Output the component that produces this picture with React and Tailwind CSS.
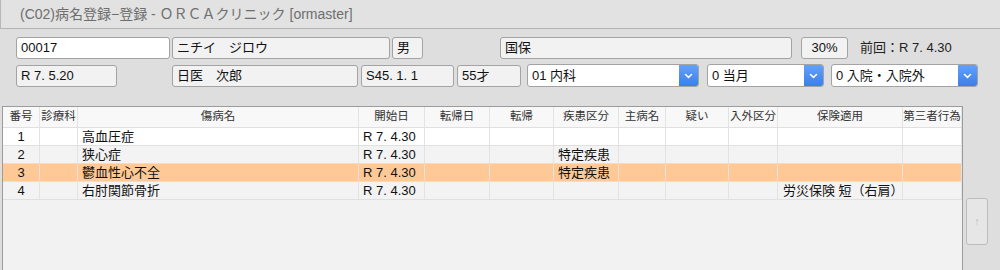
import React from "react";

const FONT = { fontFamily: '"Liberation Sans", "Noto Sans CJK JP", sans-serif' };

function Field({ w, children, white, className = "" }) {
  return (
    <div
      className={`h-[22px] shrink-0 rounded-[3px] border border-[#a3a3a3] px-[4px] flex items-center text-[13px] text-[#111] whitespace-nowrap overflow-hidden ${white ? "bg-white" : "bg-[#f2f2f2]"} ${className}`}
      style={{ width: w }}
    >
      {children}
    </div>
  );
}

function Select({ w, children, className = "" }) {
  return (
    <div
      className={`h-[23px] shrink-0 rounded-[3px] border border-[#a3a3a3] bg-white flex items-stretch overflow-hidden ${className}`}
      style={{ width: w }}
    >
      <div className="flex-1 flex items-center px-[4px] text-[13px] text-[#111] whitespace-nowrap">{children}</div>
      <div className="w-[19px] bg-gradient-to-b from-[#62a0f8] to-[#3c7fea] flex items-center justify-center">
        <svg width="9" height="6" viewBox="0 0 9 6">
          <path d="M1.5 1.5 L4.5 4.3 L7.5 1.5" stroke="white" strokeWidth="1.6" fill="none" strokeLinecap="round" />
        </svg>
      </div>
    </div>
  );
}

const cols = [
  { name: "番号", w: 37 },
  { name: "診療科", w: 38 },
  { name: "傷病名", w: 281 },
  { name: "開始日", w: 66 },
  { name: "転帰日", w: 65 },
  { name: "転帰", w: 64 },
  { name: "疾患区分", w: 65 },
  { name: "主病名", w: 47 },
  { name: "疑い", w: 63 },
  { name: "入外区分", w: 49 },
  { name: "保険適用", w: 125 },
  { name: "第三者行為", w: 59 },
];

const rows = [
  { bg: "bg-white", cells: ["1", "", "高血圧症", "R 7. 4.30", "", "", "", "", "", "", "", ""] },
  { bg: "bg-[#f3f3f3]", cells: ["2", "", "狭心症", "R 7. 4.30", "", "", "特定疾患", "", "", "", "", ""] },
  { bg: "bg-[#fec996]", cells: ["3", "", "鬱血性心不全", "R 7. 4.30", "", "", "特定疾患", "", "", "", "", ""] },
  { bg: "bg-[#f3f3f3]", cells: ["4", "", "右肘関節骨折", "R 7. 4.30", "", "", "", "", "", "", "労災保険 短（右肩）", ""] },
];

const gridCols = "37px 38px 281px 66px 65px 64px 65px 47px 63px 49px 125px 59px";

export default function App() {
  return (
    <div className="w-[1000px] h-[270px] overflow-hidden bg-[#dedede] flex flex-col" style={FONT}>
      {/* title bar */}
      <div className="h-[29px] shrink-0 border-b border-[#b3b3b3] border-l border-l-[#b8b8b8] bg-[#e2e2e2] flex items-center pl-[19px] text-[14px] text-[#6e6e6e] whitespace-nowrap">
        (C02)病名登録−登録 - ＯＲＣＡクリニック [ormaster]
      </div>

      {/* form */}
      <div className="pt-[8px] pl-[16px] flex flex-col gap-[5px]">
        <div className="flex items-center">
          <Field w={154} white>00017</Field>
          <Field w={218} className="ml-[2px]">ニチイ　ジロウ</Field>
          <Field w={31} className="ml-[2px]">男</Field>
          <Field w={292} className="ml-[77px]">国保</Field>
          <Field w={47} className="ml-[9px] justify-center">30%</Field>
          <div className="ml-[12px] text-[13px] text-[#222] whitespace-nowrap">前回：R 7. 4.30</div>
        </div>
        <div className="flex items-center">
          <Field w={101}>R 7. 5.20</Field>
          <Field w={186} className="ml-[55px]">日医　次郎</Field>
          <Field w={93} className="ml-[3px]">S45. 1. 1</Field>
          <Field w={64} className="ml-[3px]">55才</Field>
          <Select w={172} className="ml-[6px]">01 内科</Select>
          <Select w={117} className="ml-[8px]">0 当月</Select>
          <Select w={147} className="ml-[7px]">0 入院・入院外</Select>
        </div>
      </div>

      {/* table + scroll */}
      <div className="flex mt-[19px] flex-1 min-h-0">
        <div className="ml-[2px] w-[961px] shrink-0 border border-[#9c9c9c] border-b-0 bg-[#f2f2f2] flex flex-col">
          <div className="grid h-[21px] bg-[#f8f8f8] border-b border-[#e0e0e0]" style={{ gridTemplateColumns: gridCols }}>
            {cols.map((c, i) => (
              <div
                key={i}
                className="border-r border-[#e3e3e3] flex items-center justify-center text-[11.5px] text-[#333] whitespace-nowrap overflow-hidden"
              >
                {c.name}
              </div>
            ))}
          </div>
          {rows.map((r, ri) => (
            <div key={ri} className={`grid h-[18px] border-b border-[#e0e0e0] ${r.bg}`} style={{ gridTemplateColumns: gridCols }}>
              {r.cells.map((v, ci) => (
                <div
                  key={ci}
                  className={`border-r border-[#e3e3e3] flex items-center text-[13px] text-[#111] whitespace-nowrap overflow-hidden ${ci === 0 ? "justify-center" : ci === 10 ? "pl-[5px]" : "pl-[4px]"}`}
                >
                  {v}
                </div>
              ))}
            </div>
          ))}
        </div>
        <div className="ml-[3px] mt-[92px] w-[22px] h-[47px] rounded-[3px] border border-[#bdbdbd] bg-[#e6e6e6] flex items-center justify-center text-[11px] text-[#bdbdbd]">
          ↑
        </div>
      </div>
    </div>
  );
}
